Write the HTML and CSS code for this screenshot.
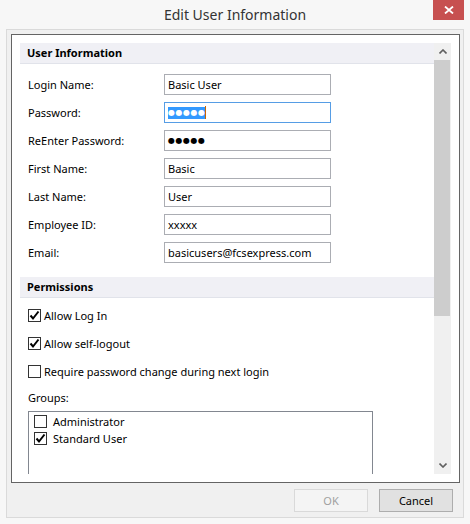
FILE: index.html
```html
<!DOCTYPE html>
<html>
<head>
<meta charset="utf-8">
<link rel="stylesheet" href="styles.css">
</head>
<body>
<div class="window">
  <div class="titlebar">
    <div class="title">Edit User Information</div>
    <div class="close">
      <svg width="10" height="8" viewBox="0 0 10 8"><path d="M1 0.5 L9 7.5 M9 0.5 L1 7.5" stroke="#fff" stroke-width="1.8" fill="none"/></svg>
    </div>
  </div>
  <div class="frame">
    <div class="panel">
      <div class="scroll">
        <div class="content">
          <div class="section-header">User Information</div>
          <div class="form">
            <div class="row"><span class="label">Login Name:</span><div class="field">Basic User</div></div>
            <div class="row"><span class="label">Password:</span><div class="field focused"><span class="sel"><span class="dots">●●●●●</span></span><span class="caret"></span></div></div>
            <div class="row"><span class="label">ReEnter Password:</span><div class="field"><span class="dots">●●●●●</span></div></div>
            <div class="row"><span class="label">First Name:</span><div class="field">Basic</div></div>
            <div class="row"><span class="label">Last Name:</span><div class="field">User</div></div>
            <div class="row"><span class="label">Employee ID:</span><div class="field">xxxxx</div></div>
            <div class="row"><span class="label">Email:</span><div class="field">basicusers@fcsexpress.com</div></div>
          </div>
          <div class="section-header">Permissions</div>
          <div class="checks">
            <div class="check"><span class="box"><svg width="11" height="11" viewBox="0 0 11 11"><path d="M1.5 5.5 L4 8.5 L9.5 1.5" stroke="#000" stroke-width="2" fill="none"/></svg></span>Allow Log In</div>
            <div class="check"><span class="box"><svg width="11" height="11" viewBox="0 0 11 11"><path d="M1.5 5.5 L4 8.5 L9.5 1.5" stroke="#000" stroke-width="2" fill="none"/></svg></span>Allow self-logout</div>
            <div class="check"><span class="box"></span>Require password change during next login</div>
          </div>
          <div class="groups-label">Groups:</div>
          <div class="listbox">
            <div class="item"><span class="box"></span>Administrator</div>
            <div class="item"><span class="box"><svg width="11" height="11" viewBox="0 0 11 11"><path d="M1.5 5.5 L4 8.5 L9.5 1.5" stroke="#000" stroke-width="2" fill="none"/></svg></span>Standard User</div>
          </div>
        </div>
        <div class="scrollbar">
          <div class="arrow"><svg width="8" height="5" viewBox="0 0 8 5"><path d="M0.5 4.5 L4 1 L7.5 4.5" stroke="#606060" stroke-width="1.6" fill="none"/></svg></div>
          <div class="track"><div class="thumb"></div></div>
          <div class="arrow"><svg width="8" height="5" viewBox="0 0 8 5"><path d="M0.5 0.5 L4 4 L7.5 0.5" stroke="#606060" stroke-width="1.6" fill="none"/></svg></div>
        </div>
      </div>
    </div>
    <div class="footer">
      <div class="btn disabled">OK</div>
      <div class="btn">Cancel</div>
    </div>
  </div>
</div>
</body>
</html>
```

FILE: styles.css
```css
* { box-sizing: border-box; }
html, body { margin: 0; padding: 0; }
body {
  width: 470px;
  height: 524px;
  overflow: hidden;
  background: #f7f7f7;
  font-family: "Noto Sans", "Open Sans", sans-serif;
  font-size: 11px;
  color: #000;
}
.window { display: flex; flex-direction: column; height: 524px; }
.titlebar {
  height: 29px;
  display: grid;
  grid-template-columns: 1fr auto 1fr;
  align-items: start;
}
.title {
  grid-column: 2;
  font-size: 14px;
  color: #333;
  line-height: 30px;
}
.close {
  grid-column: 3;
  justify-self: end;
  width: 31px;
  height: 20px;
  margin-right: 6px;
  background: #c75050;
  display: flex;
  align-items: center;
  justify-content: center;
}
.close svg { display: block; }
.frame {
  height: 489px;
  margin: 0 6px;
  border: 1px solid #dadada;
  background: #f0f0f0;
  padding: 4px 3px 0 4px;
  display: flex;
  flex-direction: column;
}
.panel {
  height: 449px;
  border: 1px solid #646464;
  background: #fff;
  padding: 8px;
}
.scroll { display: flex; height: 431px; }
.content { flex: 1; overflow: hidden; }
.section-header {
  height: 21px;
  background: #f0f0f5;
  border-bottom: 1px solid #e1e3ea;
  padding-left: 7px;
  font-weight: bold;
  line-height: 20px;
}
.form {
  padding: 10px 0 0 8px;
  margin-bottom: 14px;
  display: flex;
  flex-direction: column;
  gap: 7px;
}
.row { display: flex; align-items: center; height: 21px; }
.label { width: 136px; }
.field {
  width: 167px;
  height: 21px;
  border: 1px solid #abadb3;
  padding-left: 3px;
  line-height: 19px;
  display: flex;
  align-items: center;
}
.field.focused { border-color: #569de5; }
.dots { font-family: "DejaVu Sans", sans-serif; font-size: 8px; letter-spacing: 0.5px; line-height: 12px; }
.sel { background: #3399ff; color: #fff; height: 12px; display: flex; align-items: center; }
.caret { width: 1px; height: 13px; background: #c86400; }
.checks {
  padding: 11px 0 0 8px;
  display: flex;
  flex-direction: column;
  gap: 15px;
}
.check { display: flex; align-items: center; height: 13px; gap: 3px; }
.box {
  width: 13px;
  height: 13px;
  border: 1px solid #333;
  background: #fff;
  display: flex;
  align-items: center;
  justify-content: center;
  flex: none;
}
.box svg { display: block; }
.groups-label { padding: 12px 0 0 8px; line-height: 16px; height: 33px; }
.listbox {
  margin-left: 8px;
  width: 345px;
  height: 120px;
  border: 1px solid #828790;
  padding: 1px 5px;
}
.item { display: flex; align-items: center; height: 17px; gap: 6px; }
.scrollbar {
  width: 17px;
  background: #f0f0f0;
  display: flex;
  flex-direction: column;
}
.arrow { height: 17px; display: flex; align-items: center; justify-content: center; }
.track { flex: 1; }
.thumb { height: 256px; width: 16px; background: #cdcdcd; }
.footer {
  display: flex;
  justify-content: flex-end;
  gap: 11px;
  padding: 6px 7px 0 0;
}
.btn {
  width: 74px;
  height: 23px;
  border: 1px solid #adadad;
  background: #e1e1e1;
  display: flex;
  align-items: center;
  justify-content: center;
}
.btn.disabled { border-color: #d9d9d9; background: #f4f4f4; color: #a0a0a0; }
```
